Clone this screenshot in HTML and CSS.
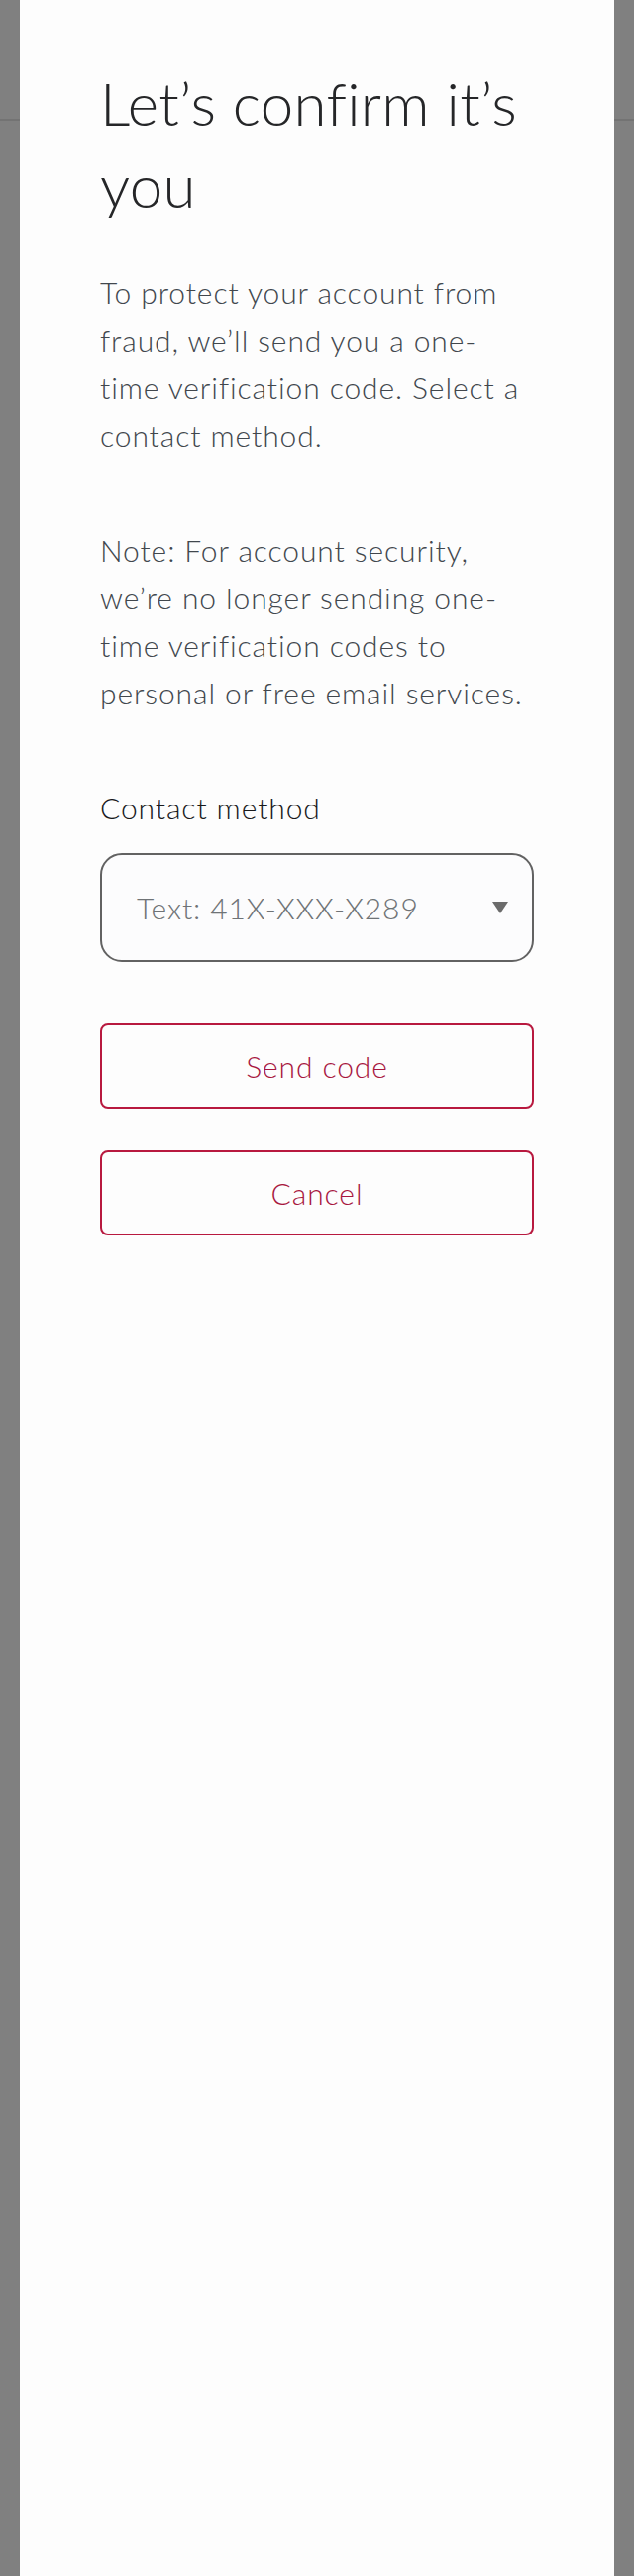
FILE: index.html
```html
<!DOCTYPE html>
<html lang="en">
<head>
<meta charset="utf-8">
<title>Let’s confirm it’s you</title>
<link rel="stylesheet" href="styles.css">
</head>
<body>
<div class="backdrop">
  <div class="header-line"></div>
  <main class="panel" role="dialog" aria-labelledby="title">
    <h1 id="title" class="title">Let’s confirm it’s you</h1>
    <p class="text">To protect your account from fraud, we’ll send you a one-time verification code. Select a contact method.</p>
    <p class="text note">Note: For account security, we’re no longer sending one-time verification codes to personal or free email services.</p>
    <label class="label" for="method">Contact method</label>
    <div class="select">
      <span class="select-value" id="method">Text: 41X-XXX-X289</span>
      <svg class="caret" width="16" height="12" viewBox="0 0 16 12" aria-hidden="true"><polygon points="0,0 16,0 8,12" fill="#6b6b6b"/></svg>
    </div>
    <div class="actions">
      <button class="btn" type="button">Send code</button>
      <button class="btn" type="button">Cancel</button>
    </div>
  </main>
</div>
</body>
</html>
```

FILE: styles.css
```css
html, body {
  margin: 0;
  padding: 0;
}
body {
  background: #808080;
  font-family: "Lato", "Open Sans", sans-serif;
}
.backdrop {
  position: relative;
  min-height: 2600px;
  padding: 0 20px;
}
.header-line {
  position: absolute;
  left: 0;
  right: 0;
  top: 120px;
  height: 2px;
  background: #737373;
}
.panel {
  position: relative;
  background: #fdfdfd;
  min-height: 2600px;
  box-sizing: border-box;
  padding: 63px 81px 0;
  display: flex;
  flex-direction: column;
}
.title {
  margin: 0;
  font-size: 60px;
  line-height: 83px;
  font-weight: 300;
  letter-spacing: 0.3px;
  color: #252628;
}
.text {
  margin: 42px 0 0;
  font-size: 30px;
  line-height: 48px;
  font-weight: 300;
  letter-spacing: 0.9px;
  color: #41474d;
}
.note {
  margin-top: 68px;
}
.label {
  margin-top: 68px;
  font-size: 30px;
  line-height: 48px;
  font-weight: 300;
  letter-spacing: 0.9px;
  color: #18191b;
}
.select {
  margin-top: 22px;
  height: 110px;
  box-sizing: border-box;
  border: 2px solid #626262;
  border-radius: 22px;
  background: #fcfcfd;
  display: flex;
  align-items: center;
  justify-content: space-between;
  padding: 0 24px 0 35px;
}
.select-value {
  font-size: 30px;
  font-weight: 300;
  letter-spacing: 0.9px;
  color: #6f7376;
}
.caret {
  display: block;
}
.actions {
  margin-top: 62px;
  display: flex;
  flex-direction: column;
  gap: 42px;
}
.btn {
  height: 86px;
  box-sizing: border-box;
  border: 2px solid #b8193f;
  border-radius: 8px;
  background: #fdfdfd;
  color: #a8173f;
  font-family: inherit;
  font-size: 30px;
  font-weight: 300;
  letter-spacing: 0.9px;
  padding: 0;
}
```
